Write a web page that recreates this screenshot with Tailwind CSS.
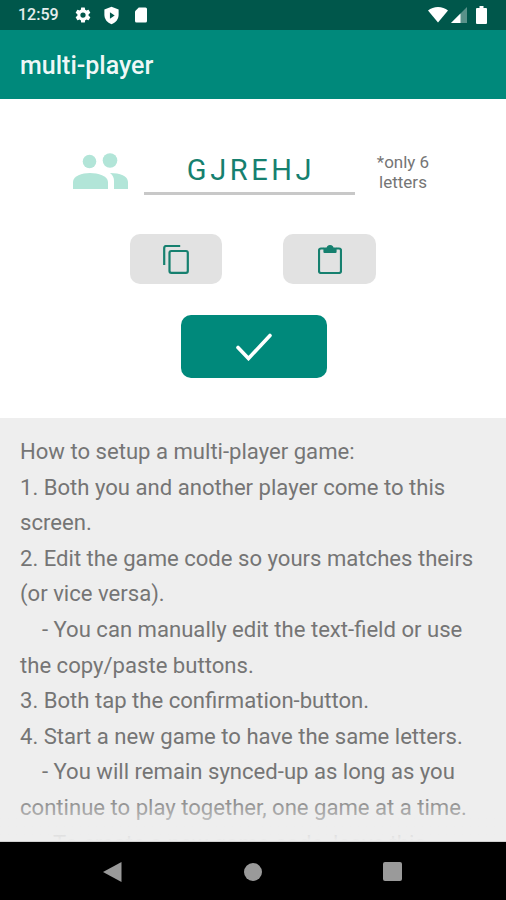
<!DOCTYPE html>
<html lang="en">
<head>
  <meta charset="UTF-8" />
  <meta name="viewport" content="width=device-width, initial-scale=1.0" />
  <title>multi-player</title>
  <script src="https://cdn.jsdelivr.net/npm/@tailwindcss/browser@4"></script>
</head>
<body class="bg-white font-['Roboto',sans-serif]">
  <div class="flex flex-col w-[506px] h-[900px] overflow-hidden">
    <!-- status bar -->
    <div class="h-[30px] shrink-0 bg-[#00574b] flex items-center pl-[18px] pr-[19px] text-white">
      <span class="text-[16px] font-medium text-white/90 w-[48px]">12:59</span>
      <svg class="ml-[8px] w-[18px] h-[18px]" viewBox="0 0 24 24" fill="#fff"><path d="M19.4 13c.04-.32.1-.66.1-1s-.06-.68-.1-1l2.1-1.65c.2-.15.25-.42.12-.64l-2-3.46c-.12-.22-.39-.3-.61-.22l-2.49 1c-.52-.4-1.08-.73-1.69-.98l-.38-2.65A.49.49 0 0 0 14 2h-4c-.25 0-.46.18-.49.42l-.38 2.65c-.61.25-1.17.59-1.69.98l-2.49-1a.5.5 0 0 0-.61.22l-2 3.46c-.13.22-.07.49.12.64L4.57 11c-.04.32-.07.66-.07 1s.03.68.07 1l-2.11 1.65c-.19.15-.25.42-.12.64l2 3.46c.12.22.39.3.61.22l2.49-1c.52.4 1.08.73 1.69.98l.38 2.65c.03.24.24.42.49.42h4c.25 0 .46-.18.49-.42l.38-2.65c.61-.25 1.17-.59 1.69-.98l2.49 1c.22.08.49 0 .61-.22l2-3.46c.13-.22.07-.49-.12-.64L19.4 13zM12 15.5a3.5 3.5 0 1 1 0-7 3.5 3.5 0 0 1 0 7z"/></svg>
      <svg class="ml-[10px] w-[19px] h-[19px]" viewBox="0 0 24 24"><path fill="#fff" d="M12 1 3 4.500v6.600c0 5.500 3.800 10.400 9 11.900 5.200-1.500 9-6.400 9-11.900V4.500L12 1z"/><path fill="#00574b" d="M10 8v8l6-4z"/></svg>
      <svg class="ml-[11px] w-[18px] h-[18px]" viewBox="0 0 24 24" fill="#fff"><path d="M9 2h9a2 2 0 0 1 2 2v16a2 2 0 0 1-2 2H6a2 2 0 0 1-2-2V7l5-5z"/></svg>
      <div class="flex-1"></div>
      <svg class="w-[20px] h-[16px]" viewBox="0 0 20 16" fill="#fff"><path d="M0 3.500C2.800 1.300 6.200 0 10 0s7.200 1.300 10 3.500L10 15.500z"/></svg>
      <svg class="ml-[3px] w-[16px] h-[16px]" viewBox="0 0 16 16"><path fill="#fff" fill-opacity=".35" d="M16 0v16H0z"/><path fill="#fff" d="M9.500 6.500V16H0z"/></svg>
      <svg class="ml-[9px] w-[11px] h-[18px]" viewBox="0 0 11 18" fill="#fff"><path d="M3.500 0h4v2H10a1 1 0 0 1 1 1v14a1 1 0 0 1-1 1H1a1 1 0 0 1-1-1V3a1 1 0 0 1 1-1h2.500z"/></svg>
    </div>

    <!-- app bar -->
    <div class="h-[69px] shrink-0 bg-[#00897b] flex items-center pl-[20px] pt-[2px]">
      <h1 class="text-[25px] font-medium text-white/95">multi-player</h1>
    </div>

    <!-- code form -->
    <div class="h-[319px] shrink-0 bg-white flex flex-col items-center">
      <div class="flex items-start w-full mt-[50px] h-[47px]">
        <svg class="ml-[73px] mt-[4px] w-[55px] h-[36px]" viewBox="0 0 55 36" fill="#b2e5d8">
          <circle cx="16.500" cy="8.500" r="6.800"/>
          <circle cx="37" cy="7.500" r="7.300"/>
          <path d="M0 36v-7c0-6 9-9 17-9s18 3 18 9v7z"/>
          <path d="M37 20c10 0 18 3 18 9v7H41v-8c0-3-1-6-4-8z"/>
        </svg>
        <div class="ml-[16px] w-[211px] h-[46px] border-b-[3px] border-[#c8c8c8] flex items-center justify-center">
          <span class="text-[29px] tracking-[3.600px] text-[#16806f] pl-[3px] pt-[1px]">GJREHJ</span>
        </div>
        <p class="ml-[20px] mt-[3px] w-[56px] text-center text-[17px] leading-[20px] text-[#757575]">*only 6 letters</p>
      </div>

      <div class="flex gap-[61px] mt-[38px]">
        <button class="w-[92px] h-[50px] bg-[#e2e2e2] rounded-[10px] flex items-center justify-center">
          <svg class="w-[26px] h-[29px]" viewBox="0 0 26 29" fill="none" stroke="#16806f" stroke-width="2.200" stroke-linejoin="round">
            <path d="M1.200 20V3a2 2 0 0 1 2-2h14"/>
            <rect x="6.500" y="6" width="18.300" height="21.800" rx="1.800"/>
          </svg>
        </button>
        <button class="w-[93px] h-[50px] bg-[#e2e2e2] rounded-[10px] flex items-center justify-center">
          <svg class="w-[24px] h-[30px]" viewBox="0 0 24 30" fill="none" stroke="#16806f" stroke-width="2.200" stroke-linejoin="round">
            <path d="M6 4.500H3a2 2 0 0 0-2 2v20.500a2 2 0 0 0 2 2h18a2 2 0 0 0 2-2V6.500a2 2 0 0 0-2-2h-3"/>
            <path fill="#16806f" d="M6.500 8V4.500h3a2.500 2.500 0 0 1 5 0h3V8z"/>
          </svg>
        </button>
      </div>

      <button class="w-[146px] h-[63px] mt-[31px] ml-[1px] bg-[#00897b] rounded-[10px] flex items-center justify-center">
        <svg class="w-[36px] h-[28px]" viewBox="0 0 36 28" fill="none" stroke="#fff" stroke-width="3.600" stroke-linecap="round"><path d="M2 14.500 12.500 25.500 34 2.500"/></svg>
      </button>
    </div>

    <!-- instructions -->
    <div class="relative flex-1 min-h-0 overflow-hidden bg-[#eeeeee] px-[20px] pt-[16px] text-[22.100px] leading-[35.600px] text-[#757575]">
      <p>How to setup a multi-player game:</p>
      <p>1. Both you and another player come to this screen.</p>
      <p>2. Edit the game code so yours matches theirs (or vice versa).</p>
      <p>&nbsp;&nbsp;&nbsp;&nbsp;- You can manually edit the text-field or use the copy/paste buttons.</p>
      <p>3. Both tap the confirmation-button.</p>
      <p>4. Start a new game to have the same letters.</p>
      <p>&nbsp;&nbsp;&nbsp;&nbsp;- You will remain synced-up as long as you continue to play together, one game at a time.</p>
      <p>&nbsp;&nbsp;&nbsp;&nbsp;- To create a new game code, leave this</p>
      <div class="absolute inset-x-0 bottom-0 h-[50px] bg-gradient-to-b from-[#eeeeee]/0 to-[#eeeeee]"></div>
    </div>

    <!-- nav bar -->
    <div class="h-[59px] shrink-0 bg-black border-t border-[#d0d0d0] flex items-center pl-[103px] pt-[1px]">
      <svg class="w-[19px] h-[20px]" viewBox="0 0 19 20" fill="#9a9a9a"><path d="M18.500 0v20L0 10z"/></svg>
      <div class="ml-[122px] w-[18px] h-[18px] rounded-full bg-[#9a9a9a]"></div>
      <div class="ml-[121px] w-[19px] h-[19px] rounded-[2px] bg-[#9a9a9a]"></div>
    </div>
  </div>
</body>
</html>
